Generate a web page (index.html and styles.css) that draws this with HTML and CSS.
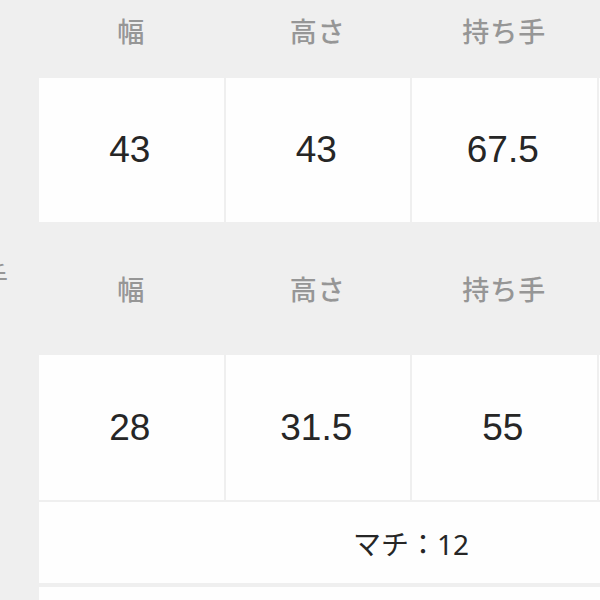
FILE: index.html
```html
<!DOCTYPE html>
<html lang="ja">
<head>
<meta charset="utf-8">
<title>サイズ表</title>
<link rel="stylesheet" href="styles.css">
</head>
<body>
<div class="sheet">
  <div class="side"></div>
  <div class="head head-top">幅</div>
  <div class="head head-top">高さ</div>
  <div class="head head-top">持ち手</div>
  <div class="head head-top"></div>

  <div class="side"></div>
  <div class="val">43</div>
  <div class="val">43</div>
  <div class="val">67.5</div>
  <div class="val"></div>

  <div class="side side-label"><span>持ち手</span></div>
  <div class="head">幅</div>
  <div class="head">高さ</div>
  <div class="head">持ち手</div>
  <div class="head"></div>

  <div class="side"></div>
  <div class="val">28</div>
  <div class="val">31.5</div>
  <div class="val">55</div>
  <div class="val"></div>

  <div class="side"></div>
  <div class="wide machi">マチ：12</div>

  <div class="side"></div>
  <div class="wide next"></div>
</div>
</body>
</html>
```

FILE: styles.css
```css
html, body {
  margin: 0;
  padding: 0;
  width: 600px;
  height: 600px;
  overflow: hidden;
  background: #efefef;
}

.sheet {
  display: grid;
  grid-template-columns: 37px repeat(4, 184.5px);
  grid-template-rows: 78px 144px 133px 145px 83px 60px;
  column-gap: 2px;
  width: max-content;
}

.side {
  background: #efefef;
}

.side-label {
  display: flex;
  align-items: center;
  justify-content: flex-end;
  padding: 0 29px 26px 0;
  overflow: hidden;
  white-space: nowrap;
  font-family: "Noto Sans CJK JP", sans-serif;
  font-size: 27px;
  line-height: 1;
  color: #969696;
}

.head {
  display: flex;
  align-items: center;
  justify-content: center;
  font-family: "Noto Sans CJK JP", sans-serif;
  font-size: 27px;
  font-weight: 500;
  line-height: 1;
  color: #969696;
  letter-spacing: 1px;
}

.head-top {
  align-items: flex-start;
  padding-top: 17px;
}

.val {
  background: #fefefe;
  display: flex;
  align-items: center;
  justify-content: center;
  padding-right: 3px;
  font-family: "Liberation Sans", Arial, sans-serif;
  font-size: 37px;
  color: #262626;
}

.wide {
  grid-column: 2 / 6;
  background: #fefefe;
}

.machi {
  margin-top: 2px;
  display: flex;
  align-items: center;
  justify-content: center;
  font-family: "Noto Sans", "Noto Sans CJK JP", sans-serif;
  font-size: 28px;
  color: #262626;
}

.next {
  margin-top: 4px;
}
```
